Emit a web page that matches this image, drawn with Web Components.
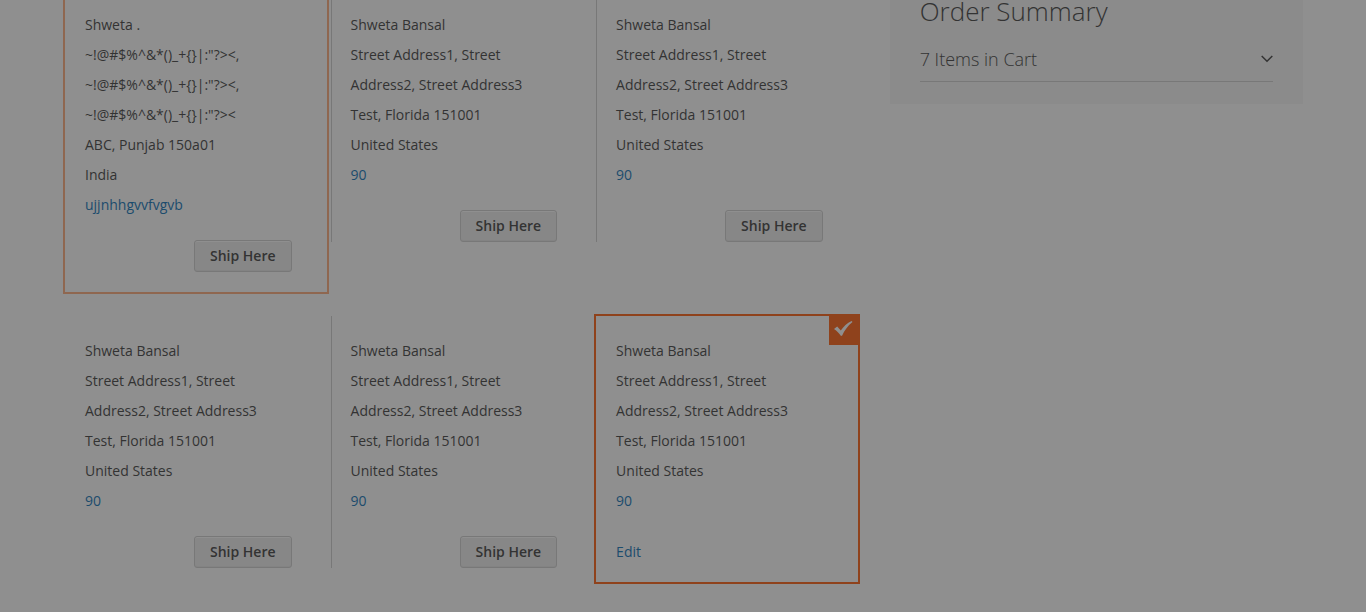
<!DOCTYPE html>
<html lang="en">
<head>
<meta charset="utf-8">
<meta name="viewport" content="width=device-width, initial-scale=1">
<title>Checkout</title>
<style>
  body { margin: 0; min-height: 100vh; background: #fff; color: #333; font: 14px/20px "Open Sans", sans-serif; overflow: hidden; }
</style>
</head>
<body>
<checkout-page>
  <address-grid>
    <address-card state="active">
      Shweta .<br>~!@#$%^&amp;*()_+{}|:"?&gt;&lt;,<br>~!@#$%^&amp;*()_+{}|:"?&gt;&lt;,<br>~!@#$%^&amp;*()_+{}|:"?&gt;&lt;<br>ABC, Punjab 150a01<br>India
      <phone-link slot="phone" number="ujjnhhgvvfvgvb"></phone-link>
    </address-card>
    <address-card>
      Shweta Bansal<br>Street Address1, Street Address2, Street Address3<br>Test, Florida 151001<br>United States
      <phone-link slot="phone" number="90"></phone-link>
    </address-card>
    <address-card>
      Shweta Bansal<br>Street Address1, Street Address2, Street Address3<br>Test, Florida 151001<br>United States
      <phone-link slot="phone" number="90"></phone-link>
    </address-card>
    <address-card>
      Shweta Bansal<br>Street Address1, Street Address2, Street Address3<br>Test, Florida 151001<br>United States
      <phone-link slot="phone" number="90"></phone-link>
    </address-card>
    <address-card>
      Shweta Bansal<br>Street Address1, Street Address2, Street Address3<br>Test, Florida 151001<br>United States
      <phone-link slot="phone" number="90"></phone-link>
    </address-card>
    <address-card state="selected">
      Shweta Bansal<br>Street Address1, Street Address2, Street Address3<br>Test, Florida 151001<br>United States
      <phone-link slot="phone" number="90"></phone-link>
    </address-card>
  </address-grid>
  <order-summary slot="sidebar">
    <span slot="title">Order Summary</span>
    <span slot="count">7 Items in Cart</span>
  </order-summary>
</checkout-page>
<page-overlay></page-overlay>

<script>
class ShadowElement extends HTMLElement {
  constructor() {
    super();
    this.attachShadow({ mode: 'open' }).innerHTML = this.constructor.markup;
  }
}

class CheckoutPage extends ShadowElement {
  static markup = `
    <style>
      :host { display: flex; align-items: flex-start; gap: 30px; box-sizing: border-box; max-width: 1280px; margin: -24px auto 0; padding: 0 20px; }
      main { flex: 1; min-width: 0; padding-top: 12px; }
      aside { flex: none; width: calc(100% / 3); }
    </style>
    <main><slot></slot></main>
    <aside><slot name="sidebar"></slot></aside>`;
}

class AddressGrid extends ShadowElement {
  static markup = `
    <style>
      :host { display: grid; grid-template-columns: repeat(3, minmax(0, 1fr)); row-gap: 20px; align-items: start; }
      /* a rule on the left of every card but the first in its row */
      ::slotted(address-card:nth-child(3n + 1)) { --rule: none; }
    </style>
    <slot></slot>`;
}

class AddressCard extends ShadowElement {
  static markup = `
    <style>
      :host { display: block; position: relative; box-sizing: border-box; padding: 20px 35px 20px 20px; border: 2px solid transparent; line-height: 30px; }
      :host::before { content: ""; display: var(--rule, block); position: absolute; left: 0; top: 0; bottom: 20px; width: 1px; background: #ccc; }
      :host([state="active"]) { border-color: #ffa673; }
      :host([state="selected"]) { border-color: #ff5501; }
      :host([state])::before { display: none; }
      address { font-style: normal; }
      .actions { display: flex; justify-content: flex-end; margin-top: 20px; }
      button { box-sizing: border-box; margin: 0; padding: 7px 15px; border: 1px solid #ccc; border-radius: 3px; background: #eee; color: #333; font: 600 14px/16px "Open Sans", sans-serif; box-shadow: inset 0 1px 0 #fff, inset 0 -1px 0 rgba(204, 204, 204, .3); cursor: pointer; }
      .edit { display: none; color: #006bb4; line-height: 20px; text-decoration: none; }
      .badge { display: none; position: absolute; top: -2px; right: -1px; width: 30px; height: 31px; background: #ff5501; }
      .badge svg { display: block; }
      :host([state="selected"]) .badge { display: block; }
      :host([state="selected"]) button { display: none; }
      :host([state="selected"]) .edit { display: block; }
      :host([state="selected"]) .actions { justify-content: flex-start; margin-top: 26px; }
    </style>
    <span class="badge"><svg width="30" height="31" viewBox="0 0 30 31" aria-hidden="true"><path d="M5 15 L8.200 12.600 L11.800 16.600 C14.500 12.600 18 9 22.600 7 L23.500 8 C18.500 12 15.500 16.500 13.200 21.500 L12 22 C10 19 8 17 5 15 Z" fill="#fff"/></svg></span>
    <address><slot></slot><slot name="phone"></slot></address>
    <div class="actions">
      <button type="button">Ship Here</button>
      <a class="edit" href="#edit">Edit</a>
    </div>`;
}

class PhoneLink extends ShadowElement {
  static markup = `
    <style>
      :host { display: block; }
      a { color: #006bb4; text-decoration: none; }
    </style>
    <a></a>`;
  connectedCallback() {
    const link = this.shadowRoot.querySelector('a');
    const number = this.getAttribute('number');
    link.href = 'tel:' + number;
    link.textContent = number;
  }
}

class OrderSummary extends ShadowElement {
  static markup = `
    <style>
      :host { display: block; padding: 22px 30px; background: #f5f5f5; }
      h2 { margin: 0 0 15px; font-size: 26px; font-weight: 300; line-height: 26px; }
      button { display: flex; align-items: center; justify-content: space-between; width: 100%; margin: 0; padding: 7px 0 9px; border: 0; border-bottom: 1px solid #ccc; background: none; color: inherit; font: 300 18px/26px "Open Sans", sans-serif; text-align: left; cursor: pointer; }
    </style>
    <h2><slot name="title"></slot></h2>
    <button type="button" aria-expanded="false">
      <slot name="count"></slot>
      <svg width="12" height="8" viewBox="0 0 12 8" aria-hidden="true"><path d="M.7 1 L6 6.200 L11.300 1" fill="none" stroke="#333" stroke-width="1.500"/></svg>
    </button>`;
}

class PageOverlay extends ShadowElement {
  static markup = `
    <style>:host { display: block; position: fixed; inset: 0; background: rgba(51, 51, 51, .55); }</style>`;
}

customElements.define('checkout-page', CheckoutPage);
customElements.define('address-grid', AddressGrid);
customElements.define('address-card', AddressCard);
customElements.define('phone-link', PhoneLink);
customElements.define('order-summary', OrderSummary);
customElements.define('page-overlay', PageOverlay);
</script>
</body>
</html>
